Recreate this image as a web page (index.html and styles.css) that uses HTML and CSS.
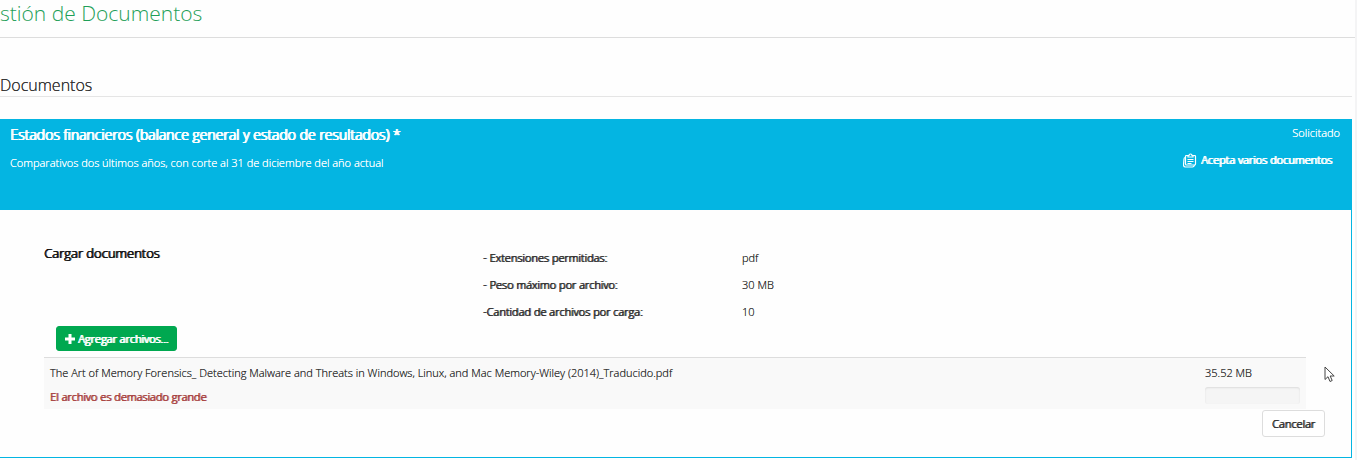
FILE: index.html
```
<!DOCTYPE html>
<html lang="es">
<head>
    <meta charset="UTF-8">
    <meta name="viewport" content="width=device-width, initial-scale=1.0">
    <title>Documentos</title>
    <link rel="stylesheet" href="styles.css">
</head>
<body>
    <div class="page">
        <header class="page-header">
            <h1>stión de Documentos</h1>
        </header>

        <main>
            <h2>Documentos</h2>

            <section class="panel">
                <div class="panel-heading">
                    <div>
                        <h3>Estados financieros (balance general y estado de resultados) *</h3>
                        <p>Comparativos dos últimos años, con corte al 31 de diciembre del año actual</p>
                    </div>
                    <div class="panel-status">
                        <span>Solicitado</span>
                        <strong>
                            <svg class="icon-docs" viewBox="0 0 14 15" fill="none" stroke="currentColor" stroke-width="1.2">
                                <path d="M5 2.5H3.5Q2.5 2.5 2.5 3.5v7.5q0 1 1 1h8q1 0 1-1V3.5q0-1-1-1H10"/>
                                <path d="M5 4V2.5h1a1.5 1.5 0 0 1 3 0h1V4z"/>
                                <path d="M4.5 6.5h6M4.5 8.5h6M4.5 10.5h4"/>
                                <path d="M2.5 4.5Q1 4.5 1 6l-.5 6q0 2 2 2h7q1.5 0 2-2"/>
                            </svg>
                            Acepta varios documentos
                        </strong>
                    </div>
                </div>

                <div class="panel-body">
                    <div class="upload-info">
                        <h4>Cargar documentos</h4>
                        <dl>
                            <dt>- Extensiones permitidas:</dt>
                            <dd>pdf</dd>
                            <dt>- Peso máximo por archivo:</dt>
                            <dd>30 MB</dd>
                            <dt>-Cantidad de archivos por carga:</dt>
                            <dd>10</dd>
                        </dl>
                    </div>

                    <button type="button" class="btn btn-add">
                        <svg class="icon-plus" viewBox="0 0 10 10" fill="currentColor">
                            <path d="M3.5 0h3v3.5H10v3H6.5V10h-3V6.5H0v-3h3.5z"/>
                        </svg>
                        Agregar archivos...
                    </button>

                    <table class="files">
                        <tr>
                            <td>
                                <p>The Art of Memory Forensics_ Detecting Malware and Threats in Windows, Linux, and Mac Memory-Wiley (2014)_Traducido.pdf</p>
                                <strong class="error">El archivo es demasiado grande</strong>
                            </td>
                            <td class="file-size">
                                <p>35.52 MB</p>
                                <div class="progress"></div>
                            </td>
                        </tr>
                    </table>

                    <div class="actions">
                        <button type="button" class="btn btn-cancel">Cancelar</button>
                    </div>
                </div>

                <svg class="cursor" viewBox="0 0 11 17" fill="#fff" stroke="#444">
                    <path d="M1 1v12.5l3-2.8 2 4.8 2.2-1-2-4.5h4z"/>
                </svg>
            </section>
        </main>
    </div>
</body>
</html>
```
FILE: styles.css
```
* {
    box-sizing: border-box;
}
body {
    margin: 0;
    background-color: #f4f4f5;
    color: #333;
    font-family: "Open Sans", sans-serif;
    font-size: 11px;
    font-weight: 300;
    line-height: 20px;
    text-shadow: 0 0 currentColor;
}
h1, h2, h3, h4, p, dl, dd {
    margin: 0;
    font-weight: 300;
}
.page {
    min-height: 100vh;
    margin-right: 2px;
    background-color: #fefefe;
}
.page-header {
    height: 38px;
    border-bottom: 1px solid #ddd;
}
h1 {
    color: #1f9f58;
    font-size: 21px;
    line-height: 26px;
    text-shadow: none;
}
main {
    padding: 36px 3px 2px 0;
}
h2 {
    margin-bottom: 22px;
    border-bottom: 1px solid #e5e5e5;
    font-size: 16px;
    line-height: 22px;
}
.panel {
    position: relative;
    border: 1px solid #04b5e2;
    border-left: 0;
}
.panel-heading {
    display: flex;
    justify-content: space-between;
    min-height: 90px;
    padding: 3px 11px 0 10px;
    background-color: #04b5e2;
    color: white;
}
h3 {
    margin-bottom: 6px;
    font-size: 14px;
    line-height: 24px;
}
.panel-status {
    display: flex;
    flex-direction: column;
    align-items: flex-end;
    gap: 7px;
}
.panel-status strong {
    display: flex;
    align-items: center;
    gap: 4px;
    padding-right: 8px;
}
h3, h4, strong, dt, .btn {
    font-weight: 300;
    text-shadow: 0 0 currentColor, 0 0 currentColor, 1px 0 currentColor;
}
h3, .panel-status strong, .btn-add {
    text-shadow: 0 0 currentColor, 0 0 currentColor, 1px 0 currentColor, 1px 0 currentColor;
}
.icon-docs {
    width: 14px;
    height: 15px;
}
.panel-body {
    padding: 33px 45px 20px 44px;
}
.upload-info {
    display: grid;
    grid-template-columns: 439px 1fr;
    margin-bottom: 4px;
}
h4 {
    color: #111;
    font-size: 13px;
    line-height: 20px;
}
dl {
    display: grid;
    grid-template-columns: 259px 1fr;
    row-gap: 7px;
    padding-top: 5px;
}
.btn {
    border: 1px solid #ddd;
    border-radius: 3px;
    font-family: inherit;
    font-size: 11px;
    cursor: pointer;
}
.btn-add {
    display: flex;
    align-items: center;
    gap: 3px;
    height: 25px;
    margin: 0 12px 6px;
    padding: 0 8px;
    border-color: #00a850;
    background-color: #00a850;
    color: white;
}
.btn-add:hover {
    background-color: #008f44;
}
.icon-plus {
    width: 10px;
    height: 10px;
}
.files {
    width: 100%;
    border-collapse: collapse;
    border-top: 1px solid #ddd;
    background-color: #f9f9f9;
}
.files td {
    padding: 5px 6px 2px;
    vertical-align: top;
}
.files p {
    margin-bottom: 4px;
}
.files .file-size {
    width: 107px;
}
.error {
    color: #a94442;
}
.progress {
    height: 17px;
    border-radius: 3px;
    background-color: #f5f5f5;
    box-shadow: inset 0 1px 2px rgba(0, 0, 0, 0.1);
}
.actions {
    display: flex;
    justify-content: flex-end;
    margin-right: -19px;
    padding-top: 1px;
}
.btn-cancel {
    height: 27px;
    padding: 0 9px;
    background-color: white;
    color: #333;
}
.cursor {
    position: absolute;
    right: 16px;
    bottom: 74px;
    width: 11px;
    height: 17px;
}
```
